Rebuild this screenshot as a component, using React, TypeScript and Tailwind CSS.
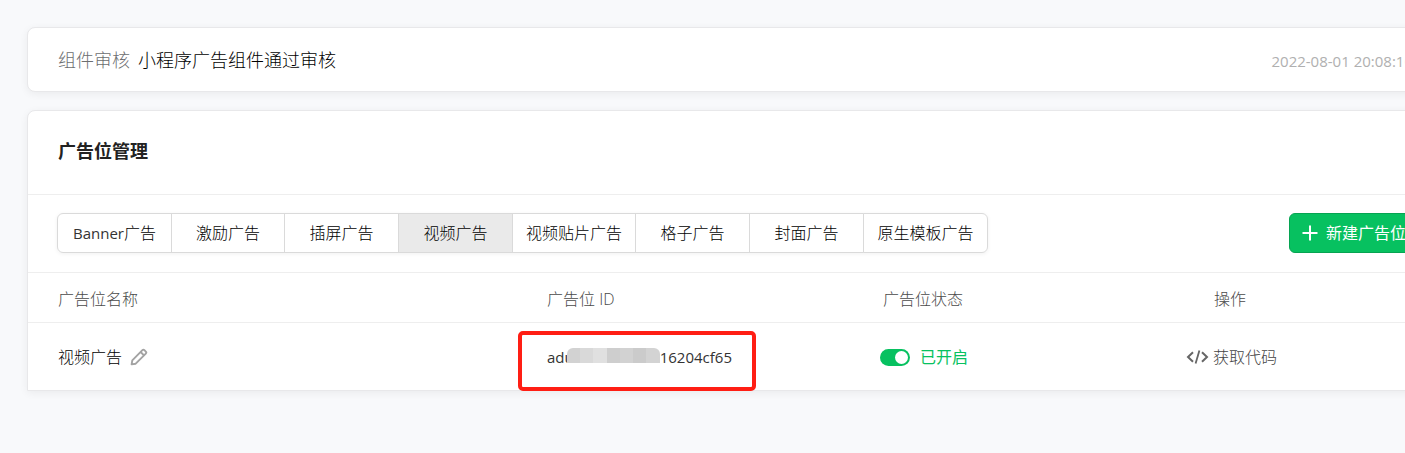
import React from 'react';

interface AdTab {
  key: string;
  latin?: string;
  label: string;
  width: string;
}

const tabs: AdTab[] = [
  { key: 'banner', latin: 'Banner', label: '广告', width: 'w-[115px]' },
  { key: 'reward', label: '激励广告', width: 'w-[114px]' },
  { key: 'interstitial', label: '插屏广告', width: 'w-[115px]' },
  { key: 'video', label: '视频广告', width: 'w-[115px]' },
  { key: 'patch', label: '视频贴片广告', width: 'w-[124px]' },
  { key: 'grid', label: '格子广告', width: 'w-[115px]' },
  { key: 'cover', label: '封面广告', width: 'w-[115px]' },
  { key: 'native', label: '原生模板广告', width: 'w-[125px]' },
];

const maskTiles = ['bg-[#d2d2d2]', 'bg-[#d9d9d9]', 'bg-[#e0e0e0]', 'bg-[#cecece]', 'bg-[#d2d2d2]', 'bg-[#cbcbcb]', 'bg-[#d3d3d3]'];

const PencilIcon = () => (
  <svg className="h-[18px] w-[18px]" viewBox="0 0 18 18" fill="none" stroke="#a3a3a3" strokeWidth="1.9" strokeLinejoin="round">
    <path d="M1.6 16.4 2.3 12.3 12.4 2.2Q13.4 1.2 14.4 2.2L15.8 3.6Q16.8 4.6 15.8 5.6L5.7 15.7Z" />
    <path d="M10.6 4 14 7.4" />
  </svg>
);

const CodeIcon = () => (
  <svg className="h-4 w-[23px]" viewBox="0 0 23 16" fill="none" stroke="#666" strokeWidth="2">
    <path d="M7 3.2 2 8 7 12.8M16 3.2 21 8 16 12.8" />
    <path d="M13.4 1.5 9.6 14.5" strokeWidth="1.8" />
  </svg>
);

const PlusIcon = () => (
  <svg className="h-4 w-4" viewBox="0 0 16 16" fill="none" stroke="#fff" strokeWidth="2">
    <path d="M8 0.5V15.5M0.5 8H15.5" />
  </svg>
);

const AuditNotice = () => (
  <section className="flex h-[65px] items-center justify-between rounded-lg border border-[#e8e8ea] bg-white pr-9 pl-[30px] shadow-[0_2px_8px_rgba(0,0,0,0.06)]">
    <p className="flex gap-2 text-lg">
      <span className="text-[#6c6e70]">组件审核</span>
      <span className="text-black">小程序广告组件通过审核</span>
    </p>
    <time className="pt-1 text-[15px] font-normal text-[#b0b0b0]">2022-08-01 20:08:10</time>
  </section>
);

const AdTabs = () => (
  <div className="flex rounded-md shadow-[0_1px_4px_rgba(0,0,0,0.06)]">
    {tabs.map((tab) => (
      <button
        key={tab.key}
        type="button"
        className={`${tab.width} ${
          tab.key === 'video' ? 'bg-[#eaeaea]' : 'bg-white'
        } -mr-px h-10 border border-[#dadada] text-base whitespace-nowrap text-black first:rounded-l-md last:mr-0 last:rounded-r-md`}
      >
        {tab.latin && <span className="text-[15px] font-normal text-[#333]">{tab.latin}</span>}
        {tab.label}
      </button>
    ))}
  </div>
);

const AdTable = () => (
  <table className="w-full table-fixed text-left text-base">
    <colgroup>
      <col className="w-[519px]" />
      <col className="w-[336px]" />
      <col className="w-[303px]" />
      <col />
    </colgroup>
    <thead>
      <tr className="h-[50px] border-y border-[#eee] text-[#4a4a4a]">
        <th className="pt-[2px] pl-[30px] font-light">广告位名称</th>
        <th className="pt-[2px] font-light">广告位 ID</th>
        <th className="pt-[2px] font-light">广告位状态</th>
        <th className="pt-[2px] pl-7 font-light">操作</th>
      </tr>
    </thead>
    <tbody>
      <tr className="h-[67px] text-black">
        <td className="pt-[2px] pl-[30px]">
          <div className="flex items-center gap-2">
            视频广告
            <button type="button" aria-label="编辑">
              <PencilIcon />
            </button>
          </div>
        </td>
        <td className="pt-[2px]">
          <div className="relative flex items-center text-[15px] font-normal text-[#333]">
            <span>adu</span>
            <span className="relative -mt-1 -ml-[7px] flex h-[15px] w-[93px] overflow-hidden rounded-t-md">
              {maskTiles.map((tile, i) => (
                <span key={i} className={`flex-1 ${tile}`} />
              ))}
            </span>
            <span>16204cf65</span>
            <span className="absolute -top-[15px] -left-[29px] h-[60px] w-[238px] rounded-[5px] border-4 border-[#ff1e14]" />
          </div>
        </td>
        <td className="pt-[2px]">
          <label className="-ml-[3px] flex items-center gap-[10px] font-normal text-[#07c160]">
            <input type="checkbox" defaultChecked className="peer sr-only" />
            <span className="flex h-[17px] w-[30px] justify-end rounded-full bg-[#07c160] p-[2px]">
              <span className="h-[13px] w-[13px] rounded-full bg-white" />
            </span>
            已开启
          </label>
        </td>
        <td className="pt-[2px]">
          <button type="button" className="flex items-center gap-1 text-[#444]">
            <CodeIcon />
            获取代码
          </button>
        </td>
      </tr>
    </tbody>
  </table>
);

const App: React.FC = () => {
  return (
    <div className="min-h-screen overflow-hidden bg-[#f8f9fb] py-[27px] pl-[27px] font-['Open_Sans','Noto_Sans_CJK_SC',sans-serif] font-light">
      <main className="-mr-[45px] flex flex-col gap-[18px]">
        <AuditNotice />
        <section className="rounded-t-lg border border-[#e8e8ea] bg-white shadow-[0_2px_8px_rgba(0,0,0,0.06)]">
          <h2 className="flex h-[84px] items-center border-b border-[#eee] px-[30px] pb-1 text-lg font-bold text-[#222]">广告位管理</h2>
          <div className="flex h-[77px] items-start justify-between pt-[18px] pr-[30px] pl-[29px]">
            <AdTabs />
            <button
              type="button"
              className="flex h-10 items-center gap-2 rounded-md border border-[#06a452] bg-[#07c160] px-3 text-base font-normal whitespace-nowrap text-white"
            >
              <PlusIcon />
              新建广告位
            </button>
          </div>
          <AdTable />
        </section>
      </main>
    </div>
  );
};

export default App;
